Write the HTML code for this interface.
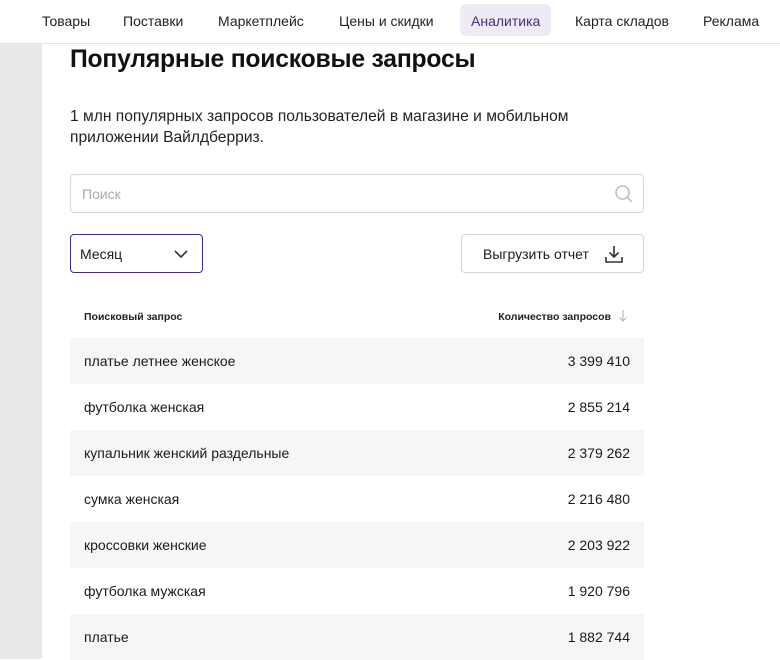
<!DOCTYPE html>
<html><head><meta charset="utf-8"><style>
*{margin:0;padding:0;box-sizing:border-box}
body{width:780px;height:659px;overflow:hidden;background:#fff;font-family:"Liberation Sans","Noto Sans CJK SC",sans-serif;color:#1a1a1a;position:relative}
.nav{position:absolute;left:0;top:0;width:780px;height:44px;border-bottom:1px solid #e3e3e3;background:#fff}
.nav span{position:absolute;top:13px;font-size:14px;color:#222}
.nav .act{top:4px;height:32px;padding:9px 11px 0;background:#efebf5;border-radius:6px;color:#4a2b7a}
.side{position:absolute;left:0;top:44px;width:42px;height:615px;background:#e8e8e8}
h1{position:absolute;left:70px;top:46px;font-size:24.7px;font-weight:bold;color:#111;letter-spacing:-0.2px}
.desc{position:absolute;left:70px;top:106px;font-size:15.6px;line-height:21px;color:#222;width:580px}
.search{position:absolute;left:70px;top:174px;width:574px;height:39px;border:1px solid #d6d6d6;border-radius:4px}
.search span{position:absolute;left:11px;top:11px;font-size:14px;color:#aaa}
.sel{position:absolute;left:70px;top:234px;width:133px;height:39px;border:1px solid #4b2a8a;border-radius:4px}
.sel span{position:absolute;left:9px;top:11px;font-size:14px}
.btn{position:absolute;left:461px;top:234px;width:183px;height:39px;border:1px solid #d6d6d6;border-radius:4px}
.btn span{position:absolute;left:21px;top:11px;font-size:14px}
.th{position:absolute;top:311px;font-size:10.5px;font-weight:bold;color:#222}
.row{position:absolute;left:70px;width:574px;height:46px;font-size:14px}
.row.g{background:#f6f6f6}
.row .a{position:absolute;left:14px;top:15px}
.row .b{position:absolute;right:14px;top:15px}
</style></head><body>
<div class="nav">
<span style="left:42px">Товары</span>
<span style="left:123px">Поставки</span>
<span style="left:218px">Маркетплейс</span>
<span style="left:339px">Цены и скидки</span>
<span class="act" style="left:460px">Аналитика</span>
<span style="left:575px">Карта складов</span>
<span style="left:703px">Реклама</span>
</div>
<div class="side"></div>
<h1>Популярные поисковые запросы</h1>
<div class="desc">1 млн популярных запросов пользователей в магазине и мобильном приложении Вайлдберриз.</div>
<div class="search"><span>Поиск</span>
<svg style="position:absolute;right:9px;top:9px" width="20" height="20" viewBox="0 0 20 20" fill="none" stroke="#bbb" stroke-width="1.5"><circle cx="8.5" cy="8.5" r="6.5"/><path d="M13.2 13.2L18 18"/></svg></div>
<div class="sel"><span>Месяц</span>
<svg style="position:absolute;left:102px;top:13px" width="16" height="12" viewBox="0 0 16 12" fill="none" stroke="#333" stroke-width="1.6"><path d="M2 3l6 6 6-6"/></svg></div>
<div class="btn"><span>Выгрузить отчет</span>
<svg style="position:absolute;left:142px;top:9px" width="20" height="20" viewBox="0 0 20 20" fill="none" stroke="#333" stroke-width="1.6"><path d="M10 2v11M5.5 8.5L10 13l4.5-4.5M2 13v5h16v-5"/></svg></div>
<div class="th" style="left:84px">Поисковый запрос</div>
<div class="th" style="right:169px">Количество запросов</div>
<svg style="position:absolute;left:618px;top:309px" width="10" height="13" viewBox="0 0 10 13" fill="none" stroke="#bbb" stroke-width="1.2"><path d="M5 1v11M1.5 8.5L5 12l3.5-3.5"/></svg>
<div class="row g" style="top:338px"><span class="a">платье летнее женское</span><span class="b">3 399 410</span></div>
<div class="row" style="top:384px"><span class="a">футболка женская</span><span class="b">2 855 214</span></div>
<div class="row g" style="top:430px"><span class="a">купальник женский раздельные</span><span class="b">2 379 262</span></div>
<div class="row" style="top:476px"><span class="a">сумка женская</span><span class="b">2 216 480</span></div>
<div class="row g" style="top:522px"><span class="a">кроссовки женские</span><span class="b">2 203 922</span></div>
<div class="row" style="top:568px"><span class="a">футболка мужская</span><span class="b">1 920 796</span></div>
<div class="row g" style="top:614px"><span class="a">платье</span><span class="b">1 882 744</span></div>
</body></html>
